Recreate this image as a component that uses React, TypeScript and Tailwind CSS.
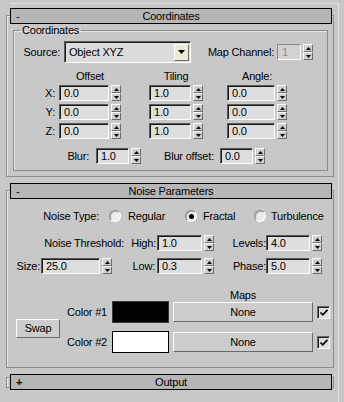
import React from 'react';

// 3ds Max style "Noise" map rollouts

function Arrows() {
  return (
    <div className="flex h-full w-[10px] flex-col">
      <div className="flex flex-1 items-center justify-center border border-t-white border-l-white border-b-[#6e6e6e] border-r-[#6e6e6e] bg-[#d0d0d0]">
        <svg width="5" height="3" viewBox="0 0 5 3">
          <path d="M2.5 0L5 3H0z" fill="#000" />
        </svg>
      </div>
      <div className="flex flex-1 items-center justify-center border border-t-white border-l-white border-b-[#6e6e6e] border-r-[#6e6e6e] bg-[#d0d0d0]">
        <svg width="5" height="3" viewBox="0 0 5 3">
          <path d="M0 0H5L2.5 3z" fill="#000" />
        </svg>
      </div>
    </div>
  );
}

function Spinner({ value, width, disabled = false }: { value: string; width: string; disabled?: boolean }) {
  return (
    <div className="flex h-[16px] gap-[2px]">
      <div
        className={
          disabled
            ? `${width} flex items-center border border-t-[#8a8a8a] border-l-[#8a8a8a] border-b-white border-r-white bg-[#d2d2d2] pl-[4px] text-[#8e8e8e]`
            : `${width} flex items-center border border-t-[#5a5a5a] border-l-[#5a5a5a] border-b-white border-r-white bg-[#dedede] pl-[4px] shadow-[inset_1px_1px_0_#1a1a1a]`
        }
      >
        {value}
      </div>
      <Arrows />
    </div>
  );
}

function Radio({ checked = false }: { checked?: boolean }) {
  return (
    <div className="flex h-[12px] w-[12px] items-center justify-center rounded-full border border-t-[#8a8a8a] border-l-[#8a8a8a] border-b-white border-r-white bg-[#ececec] shadow-[inset_1px_1px_0_#b0b0b0]">
      {checked && <div className="h-[5px] w-[5px] rounded-full bg-black" />}
    </div>
  );
}

function Checkbox() {
  return (
    <div className="flex h-[13px] w-[13px] items-center justify-center border border-t-[#6a6a6a] border-l-[#6a6a6a] border-b-white border-r-white bg-[#dedede] shadow-[inset_1px_1px_0_#1e1e1e]">
      <svg width="8" height="7" viewBox="0 0 8 7">
        <path d="M0.5 3.5L2.8 5.8L7.5 0.8" stroke="#000" strokeWidth="1.6" fill="none" />
      </svg>
    </div>
  );
}

function Header({ title, sign }: { title: string; sign: string }) {
  return (
    <div className="relative z-10 ml-[4px] mr-[2px] grid h-[16px] grid-cols-[20px_1fr_20px] items-center border border-black bg-[#b6b6b6]">
      <span className={sign === '+' ? 'pl-[5px] font-bold' : 'pl-[5px]'}>{sign}</span>
      <span className="text-center">{title}</span>
      <span />
    </div>
  );
}

const bodyCls = 'border border-[#8c8c8c] shadow-[inset_1px_1px_0_#e6e6e6]';

function CoordinatesRollout() {
  const rows = [
    { axis: 'X:', off: '0.0', til: '1.0', ang: '0.0' },
    { axis: 'Y:', off: '0.0', til: '1.0', ang: '0.0' },
    { axis: 'Z:', off: '0.0', til: '1.0', ang: '0.0' },
  ];
  return (
    <div>
      <Header title="Coordinates" sign="-" />
      <div className={`-mt-[9px] pt-[8px] ${bodyCls}`}>
        <fieldset className="mb-[5px] ml-[6px] mr-[5px] border border-[#8c8c8c] pb-[6px] shadow-[inset_1px_1px_0_#e6e6e6]">
          <legend className="ml-[6px] px-[2px] leading-[13px]">Coordinates</legend>

          <div className="mt-[4px] flex h-[22px] items-center">
            <div className="w-[50px] pr-[4px] text-right">Source:</div>
            <div className="flex h-[22px] w-[127px] items-center border border-t-[#5a5a5a] border-l-[#5a5a5a] border-b-white border-r-white bg-[#dcdcdc] pl-[4px] pr-[1px] shadow-[inset_1px_1px_0_#1e1e1e]">
              <span className="flex-1">Object XYZ</span>
              <div className="flex h-[17px] w-[15px] items-center justify-center border border-t-white border-l-white border-b-[#6e6e6e] border-r-[#6e6e6e] bg-[#ece9d8]">
                <svg width="7" height="4" viewBox="0 0 7 4">
                  <path d="M0 0H7L3.5 4z" fill="#000" />
                </svg>
              </div>
            </div>
            <div className="w-[86px] pr-[3px] text-right">Map Channel:</div>
            <Spinner value="1" width="w-[24px]" disabled />
          </div>

          <div className="mt-[7px] flex h-[13px]">
            <div className="w-[45px]" />
            <div className="w-[62px] text-center">Offset</div>
            <div className="w-[28px]" />
            <div className="w-[54px] text-center">Tiling</div>
            <div className="w-[24px]" />
            <div className="w-[60px] text-center">Angle:</div>
          </div>

          {rows.map((r, i) => (
            <div key={r.axis} className={i === 0 ? 'mt-[2px] flex h-[16px] items-center' : 'mt-[3px] flex h-[16px] items-center'}>
              <div className="w-[45px] pr-[4px] text-right">{r.axis}</div>
              <Spinner value={r.off} width="w-[50px]" />
              <div className="w-[28px]" />
              <Spinner value={r.til} width="w-[42px]" />
              <div className="w-[24px]" />
              <Spinner value={r.ang} width="w-[48px]" />
            </div>
          ))}

          <div className="mt-[9px] flex h-[16px] items-center">
            <div className="w-[82px] pr-[7px] text-right">Blur:</div>
            <Spinner value="1.0" width="w-[33px]" />
            <div className="w-[79px] pr-[6px] text-right">Blur offset:</div>
            <Spinner value="0.0" width="w-[33px]" />
          </div>
        </fieldset>
      </div>
    </div>
  );
}

function NoiseRollout() {
  return (
    <div className="mt-[6px]">
      <Header title="Noise Parameters" sign="-" />
      <div className={`-mt-[9px] pb-[14px] ${bodyCls}`}>
        {/* noise type radios */}
        <div className="mt-[18px] flex h-[14px] items-center">
          <div className="w-[92px] text-right">Noise Type:</div>
          <div className="w-[10px]" />
          <div className="flex w-[76px] items-center">
            <Radio />
            <span className="ml-[7px]">Regular</span>
          </div>
          <div className="flex w-[69px] items-center">
            <Radio checked />
            <span className="ml-[6px]">Fractal</span>
          </div>
          <div className="flex items-center">
            <Radio />
            <span className="ml-[5px]">Turbulence</span>
          </div>
        </div>

        <div className="mt-[12px] flex h-[16px] items-center">
          <div className="w-[117px] text-right">Noise Threshold:</div>
          <div className="w-[33px] pr-[1px] text-right">High:</div>
          <Spinner value="1.0" width="w-[45px]" />
          <div className="w-[52px] text-right">Levels:</div>
          <Spinner value="4.0" width="w-[44px]" />
        </div>

        <div className="mt-[7px] flex h-[16px] items-center">
          <div className="w-[34px] pr-[1px] text-right">Size:</div>
          <Spinner value="25.0" width="w-[59px]" />
          <div className="w-[45px] pr-[2px] text-right">Low:</div>
          <Spinner value="0.3" width="w-[45px]" />
          <div className="w-[52px] text-right">Phase:</div>
          <Spinner value="5.0" width="w-[44px]" />
        </div>

        {/* colours and maps */}
        <div className="mt-[15px] flex">
          <button className="ml-[9px] mt-[30px] h-[19px] w-[44px] border border-t-white border-l-white border-b-[#6a6a6a] border-r-[#6a6a6a] bg-[#cdcdcd] leading-[13px]">
            Swap
          </button>
          <div className="ml-[7px] flex flex-col">
            <div className="flex h-[12px] leading-[12px]">
              <div className="w-[106px]" />
              <div className="w-[140px] text-center">Maps</div>
            </div>
            {[
              { label: 'Color #1', swatch: 'bg-black border-[#3a3a3a]' },
              { label: 'Color #2', swatch: 'bg-white border-black' },
            ].map((c, i) => (
              <div key={c.label} className={i === 0 ? 'flex h-[22px] items-center' : 'mt-[8px] flex h-[22px] items-center'}>
                <div className="w-[45px]">{c.label}</div>
                <div className={`h-[22px] w-[57px] border ${c.swatch}`} />
                <div className="w-[4px]" />
                <div className="flex h-[20px] w-[140px] items-center justify-center border border-t-white border-l-white border-b-[#6a6a6a] border-r-[#6a6a6a] bg-[#cdcdcd]">
                  None
                </div>
                <div className="w-[4px]" />
                <Checkbox />
              </div>
            ))}
          </div>
        </div>
      </div>
    </div>
  );
}

function OutputRollout() {
  return (
    <div className="mt-[6px]">
      <Header title="Output" sign="+" />
      <div className={`-mt-[13px] h-[11px] ${bodyCls}`} />
    </div>
  );
}

export default function App() {
  return (
    <div className="h-[402px] w-[344px] overflow-hidden bg-[#c8c8c8] font-['Liberation_Sans',Arial,sans-serif] text-[11px] leading-[13px] tracking-[-0.2px] text-black">
      <div className="ml-[10px] mr-[5px] mt-[3px] h-[399px] border-r border-t border-[#e2e2e2]">
        <div className="-ml-[4px] mr-[4px] pt-[4px]">
          <CoordinatesRollout />
          <NoiseRollout />
          <OutputRollout />
        </div>
      </div>
    </div>
  );
}
